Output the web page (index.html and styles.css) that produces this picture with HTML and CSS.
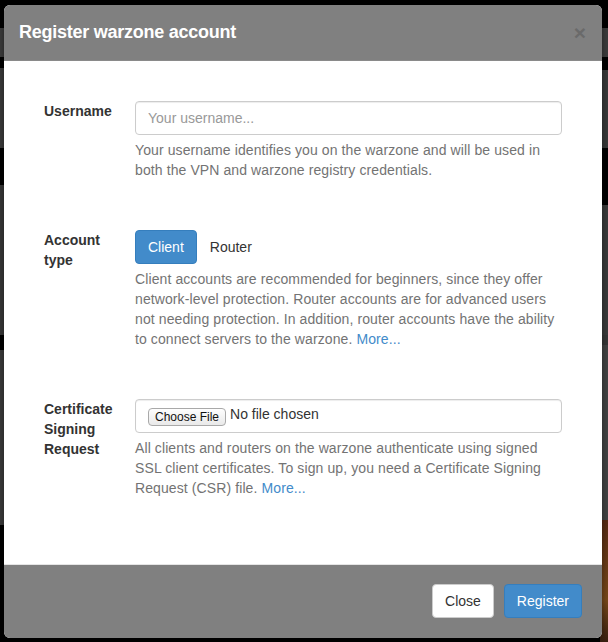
FILE: index.html
```html
<!DOCTYPE html>
<html>
<head>
<meta charset="utf-8">
<link rel="stylesheet" href="styles.css">
</head>
<body>
<div class="modal">
  <div class="modal-header">
    <h4 class="modal-title">Register warzone account</h4>
    <span class="close">&times;</span>
  </div>
  <div class="modal-body">
    <div class="group">
      <div class="label">Username</div>
      <div class="field">
        <input class="form-control" type="text" placeholder="Your username...">
        <p class="help">Your username identifies you on the warzone and will be used in both the VPN and warzone registry credentials.</p>
      </div>
    </div>
    <div class="group">
      <div class="label">Account type</div>
      <div class="field">
        <div class="toggle">
          <button class="btn btn-primary">Client</button>
          <button class="btn btn-plain">Router</button>
        </div>
        <p class="help">Client accounts are recommended for beginners, since they offer network-level protection. Router accounts are for advanced users not needing protection. In addition, router accounts have the ability to connect servers to the warzone. <a class="link">More...</a></p>
      </div>
    </div>
    <div class="group">
      <div class="label">Certificate Signing Request</div>
      <div class="field">
        <div class="file-box">
          <span class="file-btn">Choose File</span>
          <span class="file-name">No file chosen</span>
        </div>
        <p class="help">All clients and routers on the warzone authenticate using signed SSL client certificates. To sign up, you need a Certificate Signing Request (CSR) file. <a class="link">More...</a></p>
      </div>
    </div>
  </div>
  <div class="modal-footer">
    <button class="btn btn-default">Close</button>
    <button class="btn btn-primary">Register</button>
  </div>
</div>
</body>
</html>
```

FILE: styles.css
```css
html, body {
  margin: 0;
  height: 100%;
}
body {
  padding: 5px 0 0 4px;
  box-sizing: border-box;
  font-family: "Liberation Sans", Arial, sans-serif;
  font-size: 14px;
  line-height: 20px;
  color: #333;
  background-color: #000;
  background-image:
    linear-gradient(to bottom, #000 0, #000 28px, #3e3e3e 28px, #3e3e3e 57px, #000 57px, #000 70px, #3a3a3a 70px, #3a3a3a 148px, #000 148px, #000 205px, #3c3c3c 205px, #3c3c3c 335px, #383838 335px, #383838 345px, #454545 345px, #454545 520px, #5a2c14 520px, #7a4a1a 600px, #3a2010 642px),
    linear-gradient(to bottom, #000 0, #000 28px, #3e3e3e 28px, #3e3e3e 57px, #000 57px, #000 68px, #3d3d3d 68px, #3d3d3d 148px, #000 148px, #000 185px, #3a3a3a 185px, #3a3a3a 335px, #000 335px, #000 350px, #3d3d3d 350px, #3d3d3d 525px, #000 525px, #000 642px);
  background-size: 8px 642px, 100% 642px;
  background-position: right top, left top;
  background-repeat: no-repeat;
}
.modal {
  width: 598px;
  height: 633px;
  border-radius: 6px;
  overflow: hidden;
  background: #fff;
  display: flex;
  flex-direction: column;
  box-shadow: 0 3px 9px rgba(0,0,0,0.5);
}
.modal-header {
  background: #808080;
  padding: 15px 15px 15px 15px;
  border-bottom: 1px solid #8a8a8a;
  display: flex;
  align-items: center;
  justify-content: space-between;
}
.modal-title {
  margin: 0;
  font-size: 18px;
  line-height: 25px;
  font-weight: bold;
  color: #fff;
  letter-spacing: -0.25px;
}
.close {
  font-size: 21px;
  font-weight: bold;
  line-height: 1;
  color: #6a6a6a;
  margin-right: 1px;
}
.modal-body {
  flex: 1;
  padding: 20px 20px 35px 40px;
}
.group {
  display: flex;
  gap: 15px;
  padding: 20px 0;
}
.label {
  width: 76px;
  flex: none;
  font-weight: bold;
  color: #333;
}
.field {
  flex: 1;
  min-width: 0;
  margin-right: 20px;
}
.form-control {
  display: block;
  width: 100%;
  height: 34px;
  box-sizing: border-box;
  padding: 6px 12px;
  border: 1px solid #ccc;
  border-radius: 4px;
  font-family: "Liberation Sans", Arial, sans-serif;
  font-size: 14px;
  color: #555;
  box-shadow: inset 0 1px 1px rgba(0,0,0,0.075);
  margin: 0;
}
.form-control::placeholder {
  color: #999;
}
.help {
  margin: 5px 0 10px;
  color: #737373;
  letter-spacing: 0.1px;
}
.link {
  color: #428bca;
  text-decoration: none;
}
.toggle {
  display: flex;
}
.btn {
  display: inline-block;
  height: 34px;
  box-sizing: border-box;
  padding: 6px 12px;
  font-family: "Liberation Sans", Arial, sans-serif;
  font-size: 14px;
  line-height: 20px;
  border: 1px solid transparent;
  border-radius: 4px;
  margin: 0;
}
.btn-primary {
  background: #428bca;
  border-color: #357ebd;
  color: #fff;
}
.btn-plain {
  background: transparent;
  color: #333;
}
.btn-default {
  background: #fff;
  border-color: #ccc;
  color: #333;
}
.file-box {
  height: 34px;
  box-sizing: border-box;
  border: 1px solid #ccc;
  border-radius: 4px;
  padding: 0 12px;
  display: flex;
  align-items: center;
  gap: 4px;
  box-shadow: inset 0 1px 1px rgba(0,0,0,0.075);
}
.file-btn {
  display: inline-block;
  height: 18px;
  box-sizing: border-box;
  padding: 0 6px;
  margin-top: 2px;
  border: 1px solid #a9a9a9;
  border-radius: 4px;
  background: linear-gradient(#fefefe, #e9e9e9);
  font-size: 12px;
  line-height: 16px;
  color: #111;
}
.file-name {
  color: #333;
  margin-top: -4px;
}
.modal-footer {
  background: #808080;
  border-top: 1px solid #e5e5e5;
  padding: 19px 20px 20px;
  display: flex;
  justify-content: flex-end;
  gap: 10px;
}
```
